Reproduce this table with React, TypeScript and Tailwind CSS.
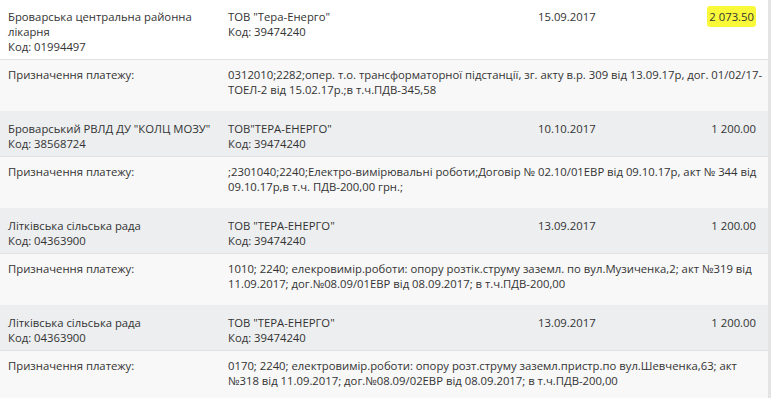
import React from "react";

interface Payment {
  payer: string[];
  payerCode: string;
  payee: string;
  payeeCode: string;
  date: string;
  amount: string;
  purpose: string[];
  marked?: boolean;
}

const PAYMENTS: Payment[] = [
  {
    payer: ["Броварська центральна районна", "лікарня"],
    payerCode: "01994497",
    payee: 'ТОВ "Тера-Енерго"',
    payeeCode: "39474240",
    date: "15.09.2017",
    amount: "2 073.50",
    marked: true,
    purpose: [
      "0312010;2282;опер. т.о. трансформаторної підстанції, зг. акту в.р. 309 від 13.09.17р, дог. 01/02/17-",
      "ТОЕЛ-2 від 15.02.17р.;в т.ч.ПДВ-345,58",
    ],
  },
  {
    payer: ['Броварський РВЛД ДУ "КОЛЦ МОЗУ"'],
    payerCode: "38568724",
    payee: 'ТОВ"ТЕРА-ЕНЕРГО"',
    payeeCode: "39474240",
    date: "10.10.2017",
    amount: "1 200.00",
    purpose: [
      ";2301040;2240;Електро-вимірювальні роботи;Договір № 02.10/01ЕВР від 09.10.17р, акт № 344 від",
      "09.10.17р,в т.ч. ПДВ-200,00 грн.;",
    ],
  },
  {
    payer: ["Літківська сільська рада"],
    payerCode: "04363900",
    payee: 'ТОВ "ТЕРА-ЕНЕРГО"',
    payeeCode: "39474240",
    date: "13.09.2017",
    amount: "1 200.00",
    purpose: [
      "1010; 2240; елекровимір.роботи: опору розтік.струму заземл. по вул.Музиченка,2; акт №319 від",
      "11.09.2017; дог.№08.09/01ЕВР від 08.09.2017; в т.ч.ПДВ-200,00",
    ],
  },
  {
    payer: ["Літківська сільська рада"],
    payerCode: "04363900",
    payee: 'ТОВ "ТЕРА-ЕНЕРГО"',
    payeeCode: "39474240",
    date: "13.09.2017",
    amount: "1 200.00",
    purpose: [
      "0170; 2240; електровимір.роботи: опору розт.струму заземл.пристр.по вул.Шевченка,63; акт",
      "№318 від 11.09.2017; дог.№08.09/02ЕВР від 08.09.2017; в т.ч.ПДВ-200,00",
    ],
  },
];

export default function App() {
  return (
    <div className="w-[771px] h-[398px] overflow-hidden bg-[#e4e4e4] font-['Open_Sans',sans-serif] text-[11.3px] leading-[15px] text-[#333]">
      <div className="w-[768px] -mt-[1px]">
        {PAYMENTS.map((p, i) => (
          <div key={i}>
            {/* Header row */}
            <div
              className={`flex pt-[10px] pb-[5px] border-b border-[#e2e2e2] ${
                i === 0 ? "bg-white" : "bg-[#eceef0]"
              }`}
            >
              <div className="w-[228px] pl-2 shrink-0">
                {p.payer.map((l) => (
                  <div key={l}>{l}</div>
                ))}
                <div>Код: {p.payerCode}</div>
              </div>
              <div className="w-[310px] shrink-0">
                <div>{p.payee}</div>
                <div>Код: {p.payeeCode}</div>
              </div>
              <div className="flex-1">{p.date}</div>
              <div className="pr-[12px] text-right">
                {p.marked ? (
                  <span className="bg-[#f9f93a] rounded-[3px] px-[2px] py-[3px]">{p.amount}</span>
                ) : (
                  p.amount
                )}
              </div>
            </div>

            {/* Purpose row */}
            <div className="flex pt-[7px] pb-[14px] bg-[#f8f8f8]">
              <div className="w-[228px] pl-2 shrink-0">Призначення платежу:</div>
              <div className="flex-1 min-w-0 whitespace-nowrap">
                {p.purpose.map((l) => (
                  <div key={l}>{l}</div>
                ))}
              </div>
            </div>
          </div>
        ))}
      </div>
    </div>
  );
}
